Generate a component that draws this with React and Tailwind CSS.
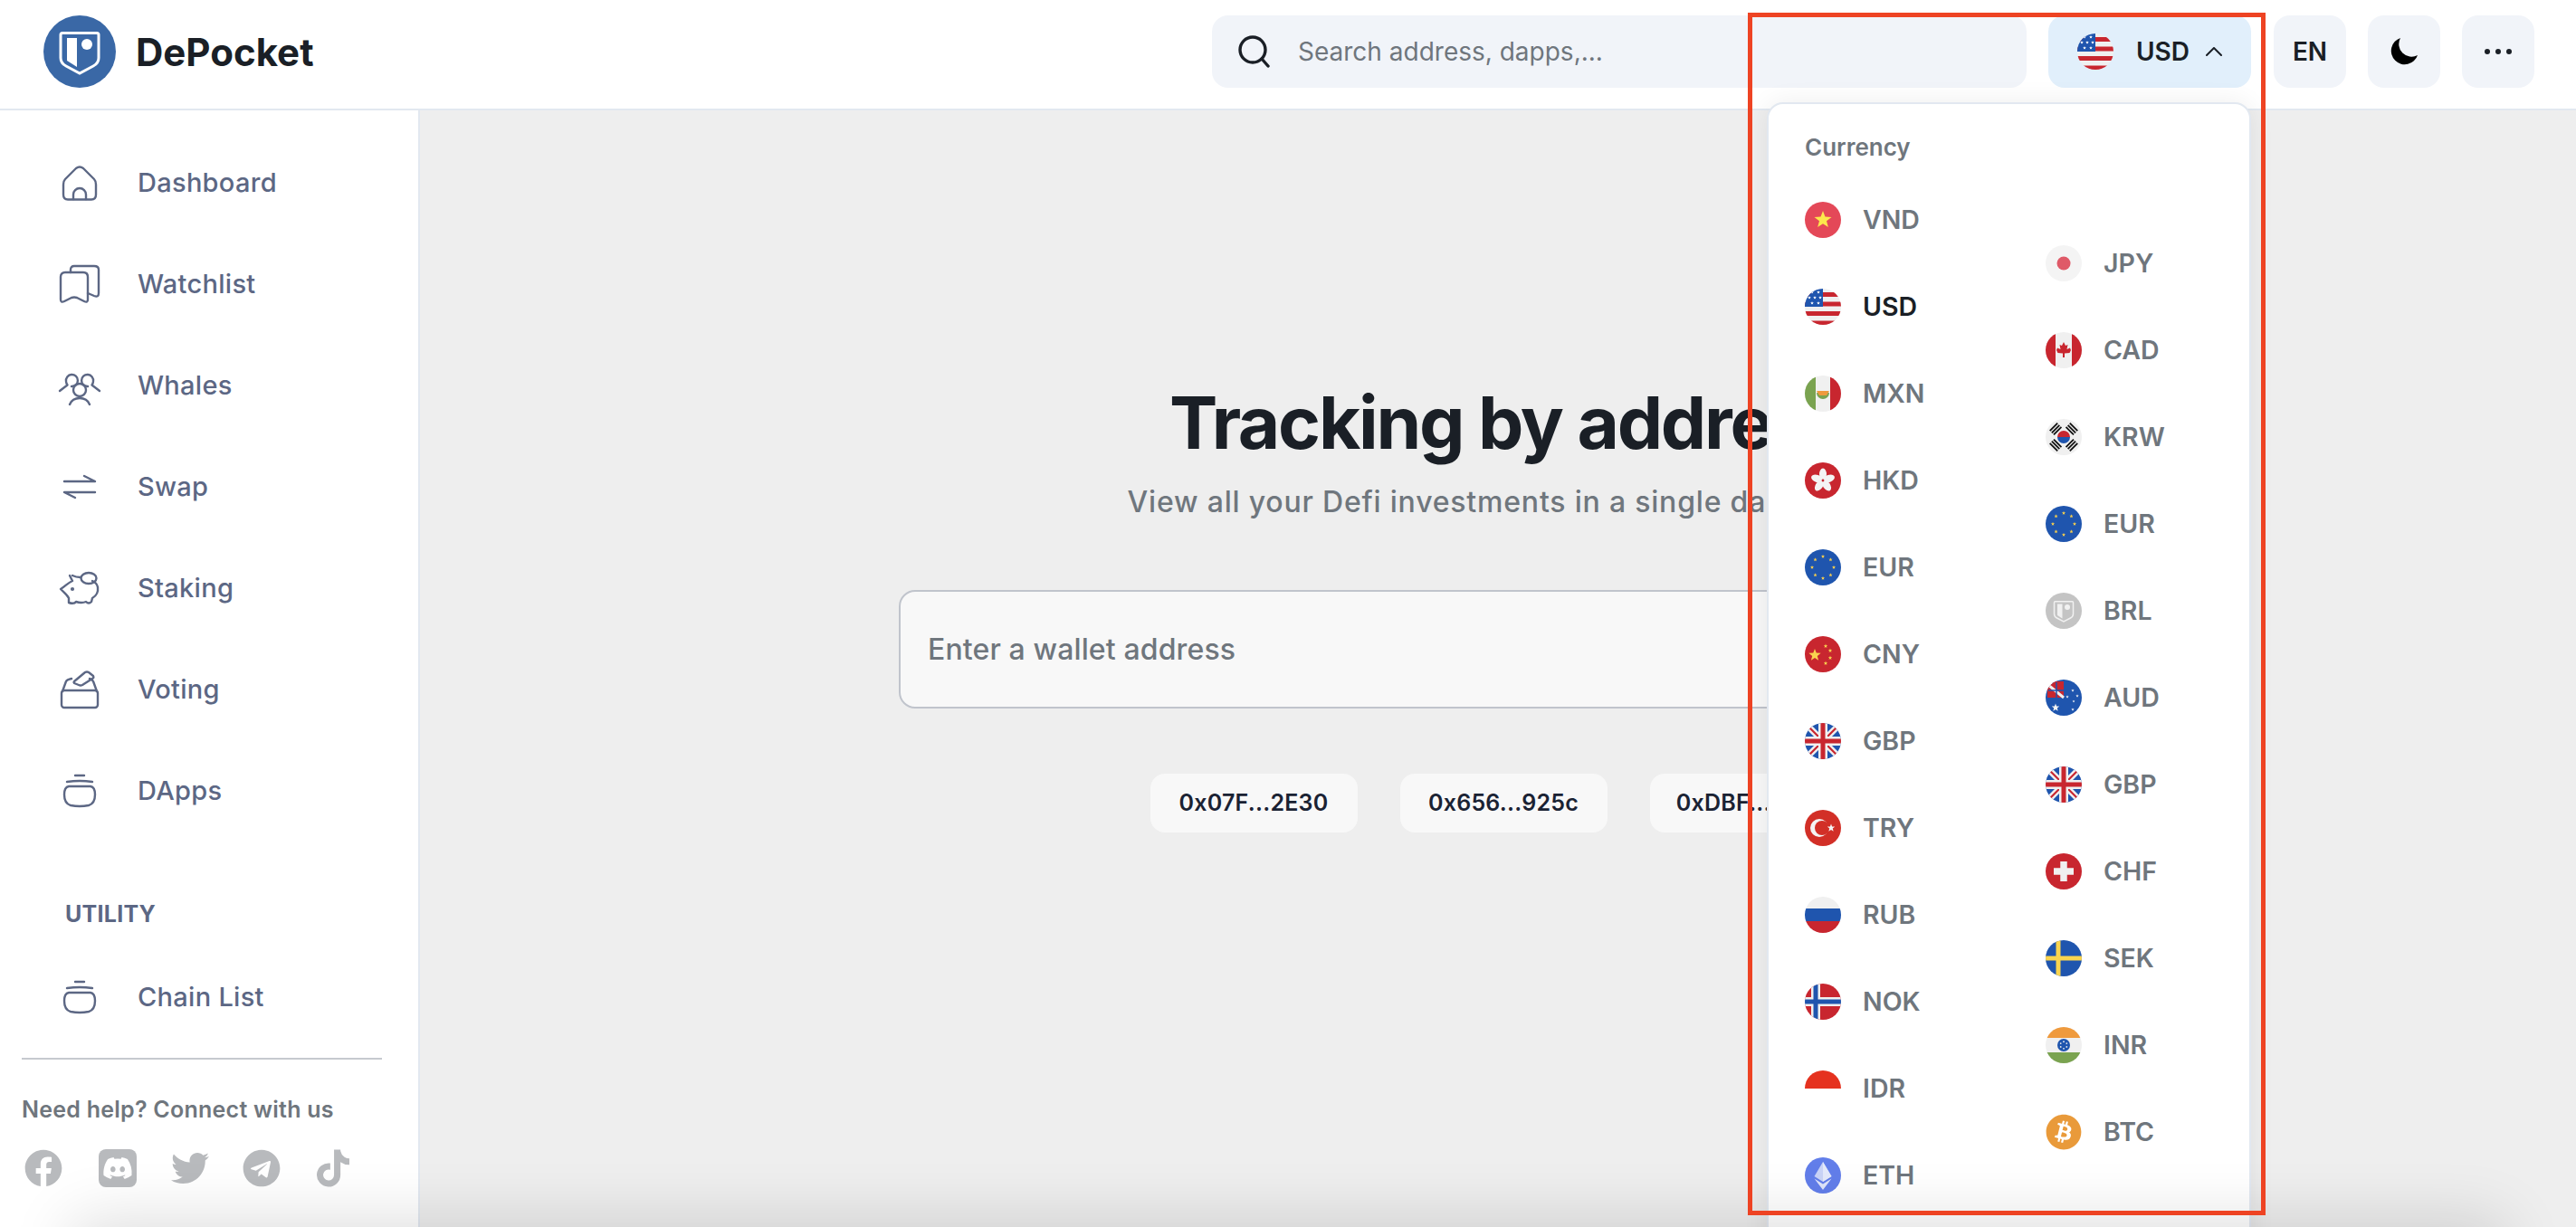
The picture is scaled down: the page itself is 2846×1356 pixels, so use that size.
import { FaBitcoin, FaDiscord, FaFacebook, FaTelegram, FaTiktok, FaTwitter } from 'react-icons/fa'

const FONT = { fontFamily: 'Inter, "Liberation Sans", sans-serif' }

const Star = ({ cx, cy, r, fill = '#fce74c' }) => {
  const pts = []
  for (let i = 0; i < 10; i++) {
    const rad = i % 2 === 0 ? r : r * 0.42
    const a = (Math.PI / 5) * i - Math.PI / 2
    pts.push(`${cx + rad * Math.cos(a)},${cy + rad * Math.sin(a)}`)
  }
  return <polygon points={pts.join(' ')} fill={fill} />
}

const ring = (cx, cy, dist, n) =>
  Array.from({ length: n }, (_, i) => {
    const a = ((Math.PI * 2) / n) * i - Math.PI / 2
    return [cx + dist * Math.cos(a), cy + dist * Math.sin(a)]
  })

const Union = () => (
  <>
    <rect width="40" height="40" fill="#1f55ae" />
    <path d="M0 0L40 40M40 0L0 40" stroke="#f0f0f0" strokeWidth="7" />
    <path d="M0 0L40 40M40 0L0 40" stroke="#c8262f" strokeWidth="2.2" />
    <path d="M20 0V40M0 20H40" stroke="#f0f0f0" strokeWidth="10" />
    <path d="M20 0V40M0 20H40" stroke="#c8262f" strokeWidth="5" />
  </>
)

const flags = {
  VND: (
    <>
      <rect width="40" height="40" fill="#e44858" />
      <Star cx={20} cy={20} r={10} />
    </>
  ),
  USD: (
    <>
      <rect width="40" height="40" fill="#f0f0f0" />
      <path d="M0 6.5H40M0 17H40M0 27.5H40M0 38H40" stroke="#c8262f" strokeWidth="5" />
      <rect width="20" height="20" fill="#1f55ae" />
      {[[8, 4], [15, 4], [5, 10], [11, 10], [17, 10], [8, 16], [15, 16]].map(([x, y]) => (
        <Star key={`${x}-${y}`} cx={x} cy={y} r={2} fill="#fff" />
      ))}
    </>
  ),
  MXN: (
    <>
      <rect width="40" height="40" fill="#f0f0f0" />
      <rect width="12" height="40" fill="#7aa350" />
      <rect x="28" width="12" height="40" fill="#c8262f" />
      <path d="M13 19a7 7 0 0 0 14 0z" fill="#7aa350" />
      <path d="M13 17h14l-3 5h-8z" fill="#ef9a3d" />
    </>
  ),
  HKD: (
    <>
      <rect width="40" height="40" fill="#c8262f" />
      {[0, 72, 144, 216, 288].map((a) => (
        <ellipse key={a} cx="20" cy="13" rx="4" ry="6.5" fill="#f4f4f4" transform={`rotate(${a} 20 20)`} />
      ))}
      <circle cx="20" cy="20" r="1.4" fill="#c8262f" />
    </>
  ),
  EUR: (
    <>
      <rect width="40" height="40" fill="#1f55ae" />
      {ring(20, 20, 12, 8).map(([x, y]) => (
        <Star key={`${x}`} cx={x} cy={y} r={2.2} fill="#f7cf4d" />
      ))}
    </>
  ),
  CNY: (
    <>
      <rect width="40" height="40" fill="#c8262f" />
      <Star cx={11} cy={21} r={7} fill="#f9d44f" />
      <Star cx={23} cy={11} r={2.4} fill="#f9d44f" />
      <Star cx={28} cy={16} r={2.4} fill="#f9d44f" />
      <Star cx={28} cy={24} r={2.4} fill="#f9d44f" />
      <Star cx={23} cy={30} r={2.4} fill="#f9d44f" />
    </>
  ),
  GBP: <Union />,
  TRY: (
    <>
      <rect width="40" height="40" fill="#d22f27" />
      <circle cx="16" cy="20" r="10" fill="#f4f4f4" />
      <circle cx="19" cy="20" r="8" fill="#d22f27" />
      <Star cx={29} cy={20} r={4.5} fill="#f4f4f4" />
    </>
  ),
  RUB: (
    <>
      <rect width="40" height="14" fill="#f0f0f0" />
      <rect y="13" width="40" height="14" fill="#1f55ae" />
      <rect y="27" width="40" height="13" fill="#c8262f" />
    </>
  ),
  NOK: (
    <>
      <rect width="40" height="40" fill="#c8262f" />
      <path d="M12 0V40M0 20H40" stroke="#f0f0f0" strokeWidth="10" />
      <path d="M12 0V40M0 20H40" stroke="#1f55ae" strokeWidth="5" />
    </>
  ),
  IDR: <rect width="40" height="20" fill="#e5321f" />,
  ETH: (
    <>
      <rect width="40" height="40" fill="#627eea" />
      <polygon points="20,5 10.5,21 20,27 29.5,21" fill="#c9d3f7" />
      <polygon points="20,5 20,27 29.5,21" fill="#e4e9fb" />
      <polygon points="10.5,23.5 20,36 29.5,23.5 20,29.5" fill="#dfe5fa" />
    </>
  ),
  JPY: (
    <>
      <rect width="40" height="40" fill="#f4f4f4" />
      <circle cx="20" cy="20" r="7.5" fill="#df5a68" />
    </>
  ),
  CAD: (
    <>
      <rect width="40" height="40" fill="#f0f0f0" />
      <rect width="11" height="40" fill="#c8262f" />
      <rect x="29" width="11" height="40" fill="#c8262f" />
      <polygon
        points="20,11 22,15 24.5,14 23.5,19 27,17.5 28,20 26.5,23 21,23.5 21,28 19,28 19,23.5 13.5,23 12,20 13,17.5 16.5,19 15.5,14 18,15"
        fill="#c8262f"
      />
    </>
  ),
  KRW: (
    <>
      <rect width="40" height="40" fill="#f0f0f0" />
      <path d="M13 20a7 7 0 0 1 14 0z" fill="#c8262f" />
      <path d="M13 20a7 7 0 0 0 14 0z" fill="#1f55ae" />
      {[45, 135, 225, 315].map((a) => (
        <g key={a} transform={`rotate(${a} 20 20)`} fill="#111">
          <rect x="14" y="3.5" width="12" height="1.8" />
          <rect x="14" y="6.5" width="12" height="1.8" />
          <rect x="14" y="9.5" width="12" height="1.8" />
        </g>
      ))}
    </>
  ),
  BRL: (
    <>
      <rect width="40" height="40" fill="#c4c4c4" />
      <g transform="scale(0.5)">
        <path d="M21 19.5H59Q61 19.5 61 21.5V47Q61 53 55 56L40 64L25 56Q19 53 19 47V21.5Q19 19.5 21 19.5Z" fill="none" stroke="#f1f1f1" strokeWidth="3" />
        <path d="M26 25H37V57L26 50Z" fill="#f1f1f1" />
        <circle cx="48" cy="32" r="6" fill="#f1f1f1" />
      </g>
    </>
  ),
  AUD: (
    <>
      <rect width="40" height="40" fill="#1f55ae" />
      <rect x="2" y="2" width="18" height="18" fill="#c8262f" />
      <path d="M3 6L20 20" stroke="#f0f0f0" strokeWidth="3" />
      <path d="M12 3V20M3 12H20" stroke="#1f55ae" strokeWidth="1.5" />
      <Star cx={11} cy={31} r={4.5} fill="#f4f4f4" />
      <Star cx={30} cy={12} r={1.8} fill="#f4f4f4" />
      <Star cx={24} cy={19} r={1.8} fill="#f4f4f4" />
      <Star cx={35} cy={18} r={1.8} fill="#f4f4f4" />
      <Star cx={31} cy={24} r={1.5} fill="#f4f4f4" />
      <Star cx={30} cy={33} r={1.8} fill="#f4f4f4" />
    </>
  ),
  CHF: (
    <>
      <rect width="40" height="40" fill="#c8262f" />
      <path d="M20 9V31M9 20H31" stroke="#f0f0f0" strokeWidth="7.5" />
    </>
  ),
  SEK: (
    <>
      <rect width="40" height="40" fill="#1f55ae" />
      <path d="M14 0V40M0 20H40" stroke="#f9d44f" strokeWidth="5" />
    </>
  ),
  INR: (
    <>
      <rect width="40" height="40" fill="#f0f0f0" />
      <rect width="40" height="12" fill="#ef9a3d" />
      <rect y="28" width="40" height="12" fill="#7aa350" />
      <circle cx="20" cy="20" r="7" fill="#1f55ae" />
      {ring(20, 20, 3.8, 6).map(([x, y]) => (
        <circle key={`${x}`} cx={x} cy={y} r="0.9" fill="#f0f0f0" />
      ))}
    </>
  ),
}

const Flag = ({ code }) => {
  if (code === 'BTC') {
    return (
      <span className="flex w-10 h-10 rounded-full bg-white items-center justify-center">
        <FaBitcoin className="w-10 h-10 text-[#e99a3a]" />
      </span>
    )
  }
  return (
    <svg viewBox="0 0 40 40" className="w-10 h-10 rounded-full overflow-hidden shrink-0">
      {flags[code]}
    </svg>
  )
}

const NavIcon = ({ children }) => (
  <svg
    viewBox="0 0 40 40"
    className="w-10 h-10 overflow-visible shrink-0"
    fill="none"
    stroke="#5c6784"
    strokeWidth="2.4"
    strokeLinecap="round"
    strokeLinejoin="round"
  >
    {children}
  </svg>
)

const pot = (
  <>
    <path d="M15 3H25" />
    <path d="M6 10Q20 8 34 10" />
    <path d="M8 15H32Q37 16 37 24Q37 34 30 36Q20 38 10 36Q3 34 3 24Q3 16 8 15Z" />
  </>
)

const navIcons = {
  Dashboard: (
    <>
      <path d="M4 16L16 4Q20 1 24 4L36 16Q38 18 38 22V33Q38 38.5 33 38.5H7Q2 38.5 2 33V22Q2 18 4 16Z" />
      <path d="M13 38V33a7 7 0 0 1 14 0V38" />
    </>
  ),
  Watchlist: (
    <>
      <path d="M-1 12Q-1 7 4 7H24Q29 7 29 12V37Q29 41 25 39L17 35Q14 34 11 35L3 39Q-1 41 -1 37Z" />
      <path d="M10 7V4Q10 0 14 0H36Q41 0 41 4V30Q41 35 36 33L29 30" />
    </>
  ),
  Whales: (
    <>
      <circle cx="20" cy="25" r="7" />
      <path d="M9 41C11 36 15 34 20 34S29 36 31 41" />
      <path d="M11 21A6.5 6.5 0 1 0 5 15.5C5 17 5.5 18 6.5 19.5L-2 26" />
      <path d="M29 21A6.5 6.5 0 1 1 35 15.5C35 17 34.5 18 33.5 19.5L42 26" />
    </>
  ),
  Swap: (
    <>
      <path d="M3 14H37L25 8" />
      <path d="M37 26H3L15 32" />
    </>
  ),
  Staking: (
    <>
      <path d="M9 6L12 12C7 14 4 18 -1 21C3 25 6 27 8 31L8 36Q14 38 16 35Q22 37 27 35Q30 38 33 35L34 31Q41 27 40 19Q39 14 34 12" />
      <path d="M12 6Q16 8 21 8" />
      <ellipse cx="30" cy="9" rx="8.5" ry="6" />
      <circle cx="12" cy="21" r="0.9" fill="#5c6784" />
    </>
  ),
  Voting: (
    <>
      <rect x="0" y="21" width="40" height="19" rx="3" />
      <path d="M1 22L5 11Q6 9 11 8" />
      <path d="M39 22L35 11Q34 9 31 8" />
      <path d="M14 11L26 1Q28 0 30 1L35 5Q36 7 34 8L23 15Q21 16 19 15L14 13Q13 12 14 11Z" />
    </>
  ),
  DApps: pot,
  'Chain List': pot,
}

const NavItem = ({ label }) => (
  <div className="flex items-center gap-[44px] h-[112px] pl-[68px]">
    <NavIcon>{navIcons[label]}</NavIcon>
    <span className="text-[29px] font-medium tracking-[0.01em] text-[#5c6784]">{label}</span>
  </div>
)

const CurrencyItem = ({ code, active }) => (
  <div className="flex items-center gap-[24px] h-[96px]">
    <Flag code={code} />
    <span className={`text-[28.5px] font-semibold ${active ? 'text-[#1a1f26]' : 'text-[#6f767d]'}`}>{code}</span>
  </div>
)

const leftCurrencies = ['VND', 'USD', 'MXN', 'HKD', 'EUR', 'CNY', 'GBP', 'TRY', 'RUB', 'NOK', 'IDR', 'ETH']
const rightCurrencies = ['JPY', 'CAD', 'KRW', 'EUR', 'BRL', 'AUD', 'GBP', 'CHF', 'SEK', 'INR', 'BTC']
const sampleAddresses = ['0x07F...2E30', '0x656...925c', '0xDBF...5E2A']

const App = () => {
  return (
    <div className="relative flex flex-col w-full h-screen overflow-hidden bg-white" style={FONT}>
      <header className="flex items-center h-[122px] shrink-0 border-b-2 border-[#e2e8f0] pl-[48px] pr-[46px] pb-[6px]">
        <svg viewBox="0 0 80 80" className="w-20 h-20 shrink-0">
          <circle cx="40" cy="40" r="40" fill="#3a68a6" />
          <path d="M21 19.5H59Q61 19.5 61 21.5V47Q61 53 55 56L40 64L25 56Q19 53 19 47V21.5Q19 19.5 21 19.5Z" fill="none" stroke="#fff" strokeWidth="3" />
          <path d="M26 25H37V57L26 50Z" fill="#fff" />
          <circle cx="48" cy="32" r="6" fill="#fff" />
        </svg>
        <span className="ml-[22px] text-[42px] font-bold text-[#1a1f26]">DePocket</span>

        <div className="ml-auto flex items-center w-[900px] h-20 rounded-[18px] bg-[#f1f4f9] pl-[28px] gap-[31px]">
          <svg viewBox="0 0 36 36" className="w-9 h-9 shrink-0" fill="none" stroke="#1a1f26" strokeWidth="3.4" strokeLinecap="round">
            <circle cx="17" cy="16" r="14" />
            <path d="M27 26L34 34" />
          </svg>
          <span className="text-[28px] text-[#6f767d]">Search address, dapps,...</span>
        </div>

        <div className="relative ml-[24px]">
          <div className="flex items-center w-[224px] h-20 rounded-[18px] bg-[#e1effb] pl-[32px]">
            <Flag code="USD" />
            <span className="ml-[25px] text-[28px] font-semibold text-[#1a1f26]">USD</span>
            <svg viewBox="0 0 18 10" className="ml-[18px] w-[18px] h-[10px]" fill="none" stroke="#1a1f26" strokeWidth="2" strokeLinecap="round" strokeLinejoin="round">
              <path d="M1 9L9 1L17 9" />
            </svg>
          </div>

          <div className="absolute z-10 top-[96px] right-0 w-[535px] h-[1300px] rounded-[18px] border-2 border-[#e2e8f0] bg-white shadow-[0_0_28px_rgba(0,0,0,0.07)] pl-[40px]">
            <div className="pt-[32px] text-[26px] leading-[32px] font-semibold text-[#6f767d]">Currency</div>
            <div className="flex mt-[16px]">
              <div className="flex flex-col w-[266px]">
                {leftCurrencies.map((c) => (
                  <CurrencyItem key={c} code={c} active={c === 'USD'} />
                ))}
              </div>
              <div className="flex flex-col pt-[48px]">
                {rightCurrencies.map((c) => (
                  <CurrencyItem key={c} code={c} />
                ))}
              </div>
            </div>
          </div>
        </div>

        <div className="flex items-center justify-center w-20 h-20 ml-[25px] rounded-[18px] bg-[#f1f4f9] text-[28px] font-semibold text-[#1a1f26]">EN</div>
        <div className="flex items-center justify-center w-20 h-20 ml-[24px] rounded-[18px] bg-[#f1f4f9]">
          <svg viewBox="0 0 30 30" className="w-[30px] h-[30px]">
            <path d="M11 0A15 15 0 1 0 30 19A14 14 0 0 1 11 0Z" fill="#000" />
          </svg>
        </div>
        <div className="flex items-center justify-center w-20 h-20 ml-[24px] rounded-[18px] bg-[#f1f4f9] gap-[6px]">
          <span className="w-[6px] h-[6px] rounded-full bg-[#1a1f26]" />
          <span className="w-[6px] h-[6px] rounded-full bg-[#1a1f26]" />
          <span className="w-[6px] h-[6px] rounded-full bg-[#1a1f26]" />
        </div>
      </header>

      <div className="flex flex-1 min-h-0">
        <aside className="w-[464px] shrink-0 border-r-2 border-[#e2e8f0] bg-white pt-6">
          {['Dashboard', 'Watchlist', 'Whales', 'Swap', 'Staking', 'Voting', 'DApps'].map((l) => (
            <NavItem key={l} label={l} />
          ))}
          <div className="mt-[64px] pl-[72px] text-[25px] leading-[32px] font-bold tracking-[0.01em] text-[#5c6784]">UTILITY</div>
          <div className="mt-[20px]">
            <NavItem label="Chain List" />
          </div>
          <div className="mt-[11px] ml-[24px] w-[398px] h-[2px] bg-[#c6c9cf]" />
          <div className="mt-[39px] pl-[24px] text-[25px] leading-[32px] font-semibold tracking-[0.01em] text-[#6f767d]">Need help? Connect with us</div>
          <div className="flex items-center mt-[28px] pl-[27px] text-[#b8babd]">
            <FaFacebook className="w-[42px] h-[42px]" />
            <span className="flex items-center justify-center w-[42px] h-[42px] ml-[40px] rounded-[8px] bg-[#b8babd]">
              <FaDiscord className="w-[34px] h-[34px] text-white" />
            </span>
            <FaTwitter className="w-[42px] h-[42px] ml-[38px]" />
            <FaTelegram className="w-[42px] h-[42px] ml-[37px]" />
            <FaTiktok className="w-[36px] h-[42px] ml-[40px]" />
          </div>
        </aside>

        <main className="flex flex-col flex-1 items-center bg-[#eeeeee] pt-[297px]">
          <h1 className="ml-[24px] text-[80px] leading-[96px] font-bold tracking-[-0.028em] text-[#1a1f26]">Tracking by address</h1>
          <p className="ml-[18px] mt-[18px] text-[32px] leading-[44px] font-medium tracking-[0.025em] text-[#6f767d]">
            View all your Defi investments in a single dashboard
          </p>
          <div className="flex items-center mt-[75px] w-[1324px] h-[131px] rounded-[18px] border-2 border-[#c0c4cc] bg-[#f8f8f8] pl-[30px] text-[32px] font-medium tracking-[0.004em] text-[#6f767d]">
            Enter a wallet address
          </div>
          <div className="flex gap-[47px] mt-[72px] ml-[12px]">
            {sampleAddresses.map((a) => (
              <div key={a} className="flex items-center justify-center w-[229px] h-[65px] rounded-[16px] bg-[#f8f8f8] text-[25px] font-semibold tracking-[0.01em] text-[#1a2233]">
                {a}
              </div>
            ))}
          </div>
        </main>
      </div>

      {/* window shadow coming up from below the screenshot */}
      <div className="absolute z-20 left-[120px] right-[120px] top-[1390px] h-[40px] shadow-[0_0_70px_40px_rgba(0,0,0,0.14)] pointer-events-none" />
      {/* red annotation box */}
      <div className="absolute z-30 left-[1931px] top-[14px] w-[572px] h-[1329px] border-[5px] border-[#ee4323] pointer-events-none" />
    </div>
  )
}

export default App
